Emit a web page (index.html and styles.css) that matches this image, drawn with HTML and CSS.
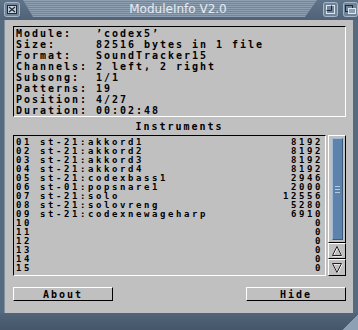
FILE: index.html
```html
<!DOCTYPE html>
<html lang="en">

<head>
    <meta charset="UTF-8">
    <meta name="viewport" content="width=device-width, initial-scale=1.0">
    <link rel="stylesheet" href="styles.css">
    <title>ModuleInfo V2.0</title>
</head>

<body>
    <div class="window">
        <div class="titlebar">
            <div class="gadget close-gadget">
                <svg width="16" height="15" viewBox="0 0 16 15">
                    <rect x="0.5" y="0.5" width="15" height="14" rx="2" fill="#6f8399" stroke="#a9b8c8" />
                    <rect x="3.5" y="3.5" width="9" height="8" fill="#c6d0da" stroke="#1e2a36" />
                    <path d="M5 5 L11 10 M11 5 L5 10" stroke="#1e2a36" stroke-width="1.2" />
                </svg>
            </div>
            <div class="dragbar">
                <span class="title">ModuleInfo V2.0</span>
            </div>
            <div class="gadget">
                <svg width="15" height="15" viewBox="0 0 15 15">
                    <rect x="0.5" y="0.5" width="14" height="14" rx="2" fill="#6f8399" stroke="#a9b8c8" />
                    <rect x="3.5" y="3.5" width="8" height="8" fill="none" stroke="#dfe6ee" />
                    <path d="M3.5 8.5 H8.5 V3.5" fill="none" stroke="#1e2a36" />
                </svg>
            </div>
            <div class="gadget">
                <svg width="15" height="15" viewBox="0 0 15 15">
                    <rect x="0.5" y="0.5" width="14" height="14" rx="2" fill="#6f8399" stroke="#a9b8c8" />
                    <rect x="2.5" y="3.5" width="7" height="6" fill="none" stroke="#1e2a36" />
                    <rect x="5.5" y="6.5" width="7" height="5" fill="#8c9db0" stroke="#dfe6ee" />
                </svg>
            </div>
        </div>

        <div class="frame">
            <div class="panel">
                <div class="info-box">
                    <div class="info-line">Module:   ’codex5’</div>
                    <div class="info-line">Size:     82516 bytes in 1 file</div>
                    <div class="info-line">Format:   SoundTracker15</div>
                    <div class="info-line">Channels: 2 left, 2 right</div>
                    <div class="info-line">Subsong:  1/1</div>
                    <div class="info-line">Patterns: 19</div>
                    <div class="info-line">Position: 4/27</div>
                    <div class="info-line">Duration: 00:02:48</div>
                </div>

                <div class="section-label">Instruments</div>

                <div class="list-row">
                    <div class="list-box">
                        <div class="inst"><span>01 st-21:akkord1</span><span>8192</span></div>
                        <div class="inst"><span>02 st-21:akkord2</span><span>8192</span></div>
                        <div class="inst"><span>03 st-21:akkord3</span><span>8192</span></div>
                        <div class="inst"><span>04 st-21:akkord4</span><span>8192</span></div>
                        <div class="inst"><span>05 st-21:codexbass1</span><span>2946</span></div>
                        <div class="inst"><span>06 st-01:popsnare1</span><span>2000</span></div>
                        <div class="inst"><span>07 st-21:solo</span><span>12556</span></div>
                        <div class="inst"><span>08 st-21:solovreng</span><span>5280</span></div>
                        <div class="inst"><span>09 st-21:codexnewageharp</span><span>6910</span></div>
                        <div class="inst"><span>10</span><span>0</span></div>
                        <div class="inst"><span>11</span><span>0</span></div>
                        <div class="inst"><span>12</span><span>0</span></div>
                        <div class="inst"><span>13</span><span>0</span></div>
                        <div class="inst"><span>14</span><span>0</span></div>
                        <div class="inst"><span>15</span><span>0</span></div>
                    </div>
                    <div class="scroller">
                        <div class="track">
                            <div class="knob">
                                <span class="grip"></span>
                            </div>
                        </div>
                        <div class="arrow">
                            <svg width="12" height="12" viewBox="0 0 12 12">
                                <path d="M6 1.5 L10.5 10.5 H1.5 Z" fill="none" stroke="#fff" stroke-width="1" transform="translate(0.6 0.6)" />
                                <path d="M6 1.5 L10.5 10.5 H1.5 Z" fill="none" stroke="#222" stroke-width="1" />
                            </svg>
                        </div>
                        <div class="arrow">
                            <svg width="12" height="12" viewBox="0 0 12 12">
                                <path d="M1.5 1.5 H10.5 L6 10.5 Z" fill="none" stroke="#fff" stroke-width="1" transform="translate(0.6 0.6)" />
                                <path d="M1.5 1.5 H10.5 L6 10.5 Z" fill="none" stroke="#222" stroke-width="1" />
                            </svg>
                        </div>
                    </div>
                </div>

                <div class="button-row">
                    <button class="btn">About</button>
                    <button class="btn">Hide</button>
                </div>
            </div>
        </div>

        <div class="bottom-border">
            <div class="sizer"></div>
        </div>
    </div>
</body>

</html>
```

FILE: styles.css
```css
* {
    margin: 0;
    padding: 0;
    box-sizing: border-box;
}

body {
    background: #4b5d71;
}

.window {
    width: 358px;
    height: 330px;
    display: flex;
    flex-direction: column;
    background: #566a80;
}

/* title bar */

.titlebar {
    height: 20px;
    display: flex;
    align-items: flex-start;
    background: linear-gradient(#5f7389, #4f6278);
}

.gadget {
    width: 15px;
    height: 15px;
    margin-top: 2px;
    line-height: 0;
}

.close-gadget {
    width: 16px;
    margin-left: 4px;
}

.gadget + .gadget {
    margin-left: 5px;
}

.dragbar {
    flex: 1;
    height: 17px;
    margin: 0 6px 0 3px;
    display: flex;
    align-items: center;
    justify-content: center;
    clip-path: polygon(0 0, 100% 0, calc(100% - 12px) 100%, 10px 100%);
    background: repeating-linear-gradient(#8e9fb1 0, #8e9fb1 1px, #73869b 1px, #73869b 2px);
}

.title {
    font-family: "DejaVu Sans", sans-serif;
    font-size: 12px;
    color: #e6ecf2;
    padding-left: 16px;
}

/* window frame and panel */

.frame {
    flex: 1;
    display: flex;
    padding: 0 5px 0 4px;
}

.panel {
    flex: 1;
    background: #c0c0c0;
    padding: 6px 7px 0 9px;
    font-family: "DejaVu Sans Mono", monospace;
    font-weight: bold;
    font-size: 10px;
    letter-spacing: 1.98px;
    color: #000;
    box-shadow: inset 1px 0 #7f90a3;
}

.info-box {
    height: 91px;
    border: 1px solid;
    border-color: #000 #fff #fff #000;
    padding: 1px 0 0 2px;
}

.info-line {
    height: 11px;
    line-height: 11px;
    white-space: pre;
}

.section-label {
    height: 18px;
    line-height: 20px;
    text-align: center;
}

/* instrument list */

.list-row {
    display: flex;
    gap: 2px;
    height: 141px;
}

.list-box {
    flex: 1;
    border: 1px solid;
    border-color: #000 #fff #fff #000;
    padding: 2px 2px 0 2px;
}

.inst {
    height: 9px;
    line-height: 9px;
    font-size: 9px;
    letter-spacing: 2.58px;
    display: flex;
    justify-content: space-between;
    white-space: pre;
}

.scroller {
    width: 18px;
    display: flex;
    flex-direction: column;
}

.track {
    flex: 1;
    border: 1px solid;
    border-color: #fff #000 #000 #fff;
    padding: 2px 2px 2px 3px;
    display: flex;
}

.knob {
    flex: 1;
    background: #5d82ab;
    border: 1px solid;
    border-color: #9fbad6 #3c5a7c #3c5a7c #9fbad6;
    display: flex;
    align-items: center;
    justify-content: center;
}

.grip {
    width: 5px;
    height: 7px;
    background: repeating-linear-gradient(#b7cbe0 0, #b7cbe0 1px, transparent 1px, transparent 3px);
}

.arrow {
    height: 16px;
    border: 1px solid;
    border-color: #fff #000 #000 #fff;
    display: flex;
    align-items: center;
    justify-content: center;
}

.arrow + .arrow {
    height: 17px;
}

/* buttons */

.button-row {
    display: flex;
    justify-content: space-between;
    margin-top: 11px;
}

.btn {
    width: 100px;
    height: 14px;
    background: #c0c0c0;
    border: 1px solid;
    border-color: #fff #000 #000 #fff;
    font: inherit;
    letter-spacing: inherit;
    line-height: 11px;
    color: #000;
}

/* bottom border */

.bottom-border {
    height: 17px;
    display: flex;
    justify-content: flex-end;
    align-items: flex-end;
    background: linear-gradient(#52657a, #45566a);
}

.sizer {
    width: 16px;
    height: 15px;
    background: linear-gradient(135deg, transparent 50%, #8ea0b4 50%);
}
```
